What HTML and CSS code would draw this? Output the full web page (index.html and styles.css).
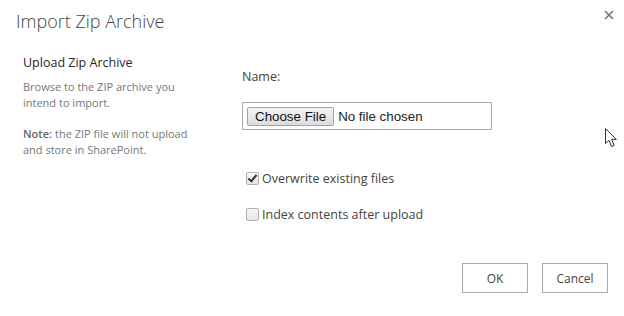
FILE: index.html
```html
<!DOCTYPE html>
<html lang="en">
<head>
    <meta charset="UTF-8">
    <meta name="viewport" content="width=device-width, initial-scale=1.0">
    <title>Import Zip Archive</title>
    <link rel="stylesheet" href="styles.css">
</head>
<body>
    <div class="dialog">
        <div class="dialog-header">
            <h1>Import Zip Archive</h1>
            <button class="close" type="button" aria-label="Close">
                <svg width="10" height="10" viewBox="0 0 10 10">
                    <path d="M1 1 L9 9 M9 1 L1 9" stroke="#777" stroke-width="1.7" fill="none"/>
                </svg>
            </button>
        </div>
        <div class="dialog-body">
            <div class="side">
                <h2>Upload Zip Archive</h2>
                <p>Browse to the ZIP archive you intend to import.</p>
                <p class="note"><b>Note:</b><span>the ZIP file will not upload</span> <span>and store in SharePoint.</span></p>
            </div>
            <div class="main">
                <label class="field-label" for="zip-file">Name:</label>
                <div class="file-box">
                    <input type="file" id="zip-file" name="file">
                </div>
                <label class="check"><input type="checkbox" checked> Overwrite existing files</label>
                <label class="check"><input type="checkbox"> Index contents after upload</label>
            </div>
        </div>
        <div class="dialog-footer">
            <button type="button" class="btn">OK</button>
            <button type="button" class="btn">Cancel</button>
        </div>
    </div>

    <!-- mouse pointer over the dialog -->
    <svg class="pointer" width="13" height="20" viewBox="0 0 13 20">
        <path d="M0.5 0.5 L0.5 15.5 L4 12.3 L6.6 18.5 L9.2 17.4 L6.7 11.4 L11.3 11.4 Z" fill="#fff" stroke="#333" stroke-width="1" stroke-linejoin="round"/>
    </svg>
</body>
</html>
```

FILE: styles.css
```css
body {
    margin: 0;
    background: #fff;
    font-family: "Open Sans", "Noto Sans", sans-serif;
    color: #444;
}
.dialog {
    position: relative;
    width: 624px;
    height: 316px;
}
.dialog-header {
    display: flex;
    justify-content: space-between;
    align-items: flex-start;
    padding: 9px 10px 0 16px;
}
.dialog-header h1 {
    margin: 0;
    font-size: 18px;
    font-weight: 300;
    line-height: 24px;
    color: #444;
}
.close {
    margin-top: 1px;
    padding: 0;
    border: 0;
    background: none;
    width: 10px;
    height: 10px;
    display: block;
    cursor: pointer;
}
.close svg {
    display: block;
}
.dialog-body {
    display: flex;
    padding-top: 21px;
}
.side {
    width: 180px;
    padding-left: 23px;
    margin-right: 39px;
}
.side h2 {
    margin: 0 0 7px;
    font-size: 12.5px;
    font-weight: 400;
    line-height: 18px;
    color: #262626;
}
.side p {
    margin: 0 0 15px;
    font-size: 11px;
    line-height: 16px;
    color: #777;
}
.side .note b {
    font-weight: 600;
    color: #666;
    margin-right: 3px;
}
.main {
    padding-top: 14px;
    display: flex;
    flex-direction: column;
    align-items: flex-start;
}
.field-label {
    font-size: 12.5px;
    line-height: 18px;
    color: #444;
}
.file-box {
    margin-top: 16px;
    width: 240px;
    height: 18px;
    padding: 4px;
    border: 1px solid #ababab;
    display: flex;
    align-items: center;
}
.file-box input {
    font-family: "Liberation Sans", Arial, sans-serif;
    font-size: 13.33px;
    color: #222;
}
.file-box input::file-selector-button {
    font-family: "Liberation Sans", Arial, sans-serif;
    font-size: 13.33px;
    color: #111;
    height: 19px;
    padding: 0 7px;
    margin-right: 4px;
    border: 1px solid #a3a3a3;
    border-radius: 2px;
    background: linear-gradient(#f4f4f4, #dcdcdc);
}
.check {
    display: flex;
    align-items: center;
    height: 18px;
    font-size: 12.5px;
    color: #444;
    margin-top: 18px;
}
.file-box + .check {
    margin-top: 39px;
}
.check input {
    appearance: none;
    width: 13px;
    height: 13px;
    margin: 0 3px 0 4px;
    border: 1px solid #b0b0b0;
    border-radius: 2px;
    background: linear-gradient(#f7f7f7, #e6e6e6);
    position: relative;
}
.check input:checked::after {
    content: "";
    position: absolute;
    left: 3px;
    top: 0px;
    width: 3px;
    height: 7px;
    border: solid #333;
    border-width: 0 2px 2px 0;
    transform: rotate(40deg);
}
.dialog-footer {
    display: flex;
    justify-content: flex-end;
    gap: 14px;
    padding: 40px 16px 0 0;
}
.btn {
    width: 66px;
    height: 30px;
    border: 1px solid #ababab;
    background: #fff;
    font-family: "Open Sans", "Noto Sans", sans-serif;
    font-size: 12px;
    color: #444;
    cursor: pointer;
}
.pointer {
    position: absolute;
    left: 605px;
    top: 128px;
}
```
